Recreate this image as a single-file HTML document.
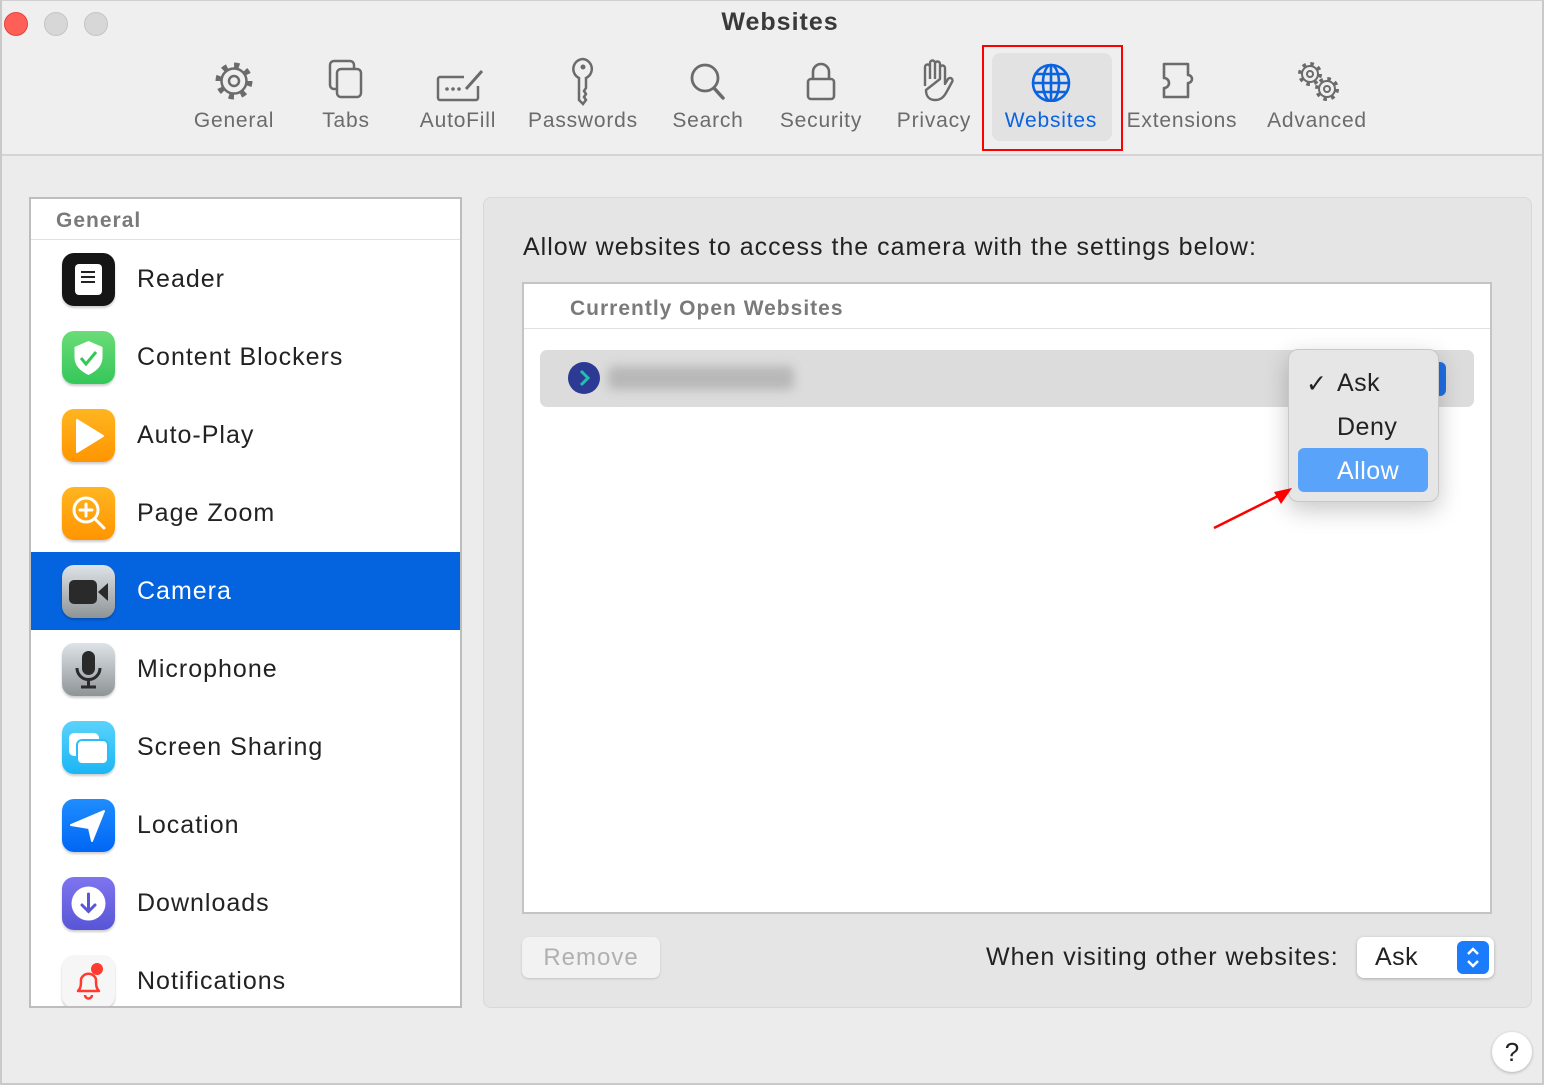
<!DOCTYPE html>
<html><head><meta charset="utf-8"><style>
*{box-sizing:border-box;margin:0;padding:0}
body{width:1544px;height:1085px;overflow:hidden;background:#ececec;font-family:"Liberation Sans",sans-serif;position:relative}
.win{position:absolute;left:0;top:0;width:1544px;height:1085px;border:2px solid #c9c9c9;border-top:1px solid #d0d0d0}
.tb{position:absolute;left:2px;top:1px;width:1540px;height:155px;background:#efefef;border-bottom:2px solid #d4d4d4}
.dot{position:absolute;top:12px;width:24px;height:24px;border-radius:50%;background:#d7d7d7;border:1px solid #c3c3c3}
.title{position:absolute;left:0;width:1560px;top:8px;text-align:center;font-weight:bold;font-size:25px;color:#3a3a3a;letter-spacing:1px}
.tool{position:absolute;top:56px;text-align:center;font-size:21px;color:#6b6b6b;letter-spacing:0.8px}
.tool svg{display:block;margin:0 auto}
.tool span{display:block;margin-top:7px;white-space:nowrap}
.abs{position:absolute}
.side{position:absolute;left:29px;top:197px;width:433px;height:811px;background:#fff;border:2px solid #bdbdbd;overflow:hidden}
.row{position:absolute;left:0;width:431px;height:78px}
.row .ic{position:absolute;left:31px;top:13px;width:53px;height:53px;border-radius:12px;overflow:hidden;box-shadow:0 2px 2px rgba(0,0,0,.2)}
.row .t{position:absolute;left:106px;top:25px;font-size:25px;color:#222;letter-spacing:1px}
.right{position:absolute;left:483px;top:197px;width:1049px;height:811px;background:#e5e5e5;border:1px solid #d8d8d8;border-radius:8px}
</style></head><body>
<div class="win"></div>
<div class="tb"></div>
<div class="dot" style="left:4px;background:#fe5f57;border-color:#e0443e"></div>
<div class="dot" style="left:44px"></div>
<div class="dot" style="left:84px"></div>
<div class="title">Websites</div>

<!-- toolbar -->
<div class="tool" style="left:180px;width:108px"><svg width="44" height="46" viewBox="0 0 44 46"><circle cx="22" cy="25" r="16" fill="none" stroke="#6b6b6b" stroke-width="5" stroke-dasharray="5.3 7.26"/><circle cx="22" cy="25" r="12.5" fill="#efefef" stroke="#6b6b6b" stroke-width="2.5"/><circle cx="22" cy="25" r="5" fill="none" stroke="#6b6b6b" stroke-width="2.5"/></svg><span>General</span></div>
<div class="tool" style="left:305px;width:82px"><svg width="44" height="46" viewBox="0 0 44 46"><rect x="6" y="5" width="24" height="28" rx="4" fill="none" stroke="#6b6b6b" stroke-width="2.5"/><rect x="13" y="13" width="24" height="28" rx="4" fill="#efefef" stroke="#6b6b6b" stroke-width="2.5"/></svg><span>Tabs</span></div>
<div class="tool" style="left:408px;width:100px"><svg width="60" height="46" viewBox="0 0 60 46"><path d="M36 21H12a2 2 0 0 0-2 2v19a2 2 0 0 0 2 2h36a2 2 0 0 0 2-2V30" fill="none" stroke="#6b6b6b" stroke-width="2.5"/><circle cx="19" cy="33" r="1.8" fill="#6b6b6b"/><circle cx="25" cy="33" r="1.8" fill="#6b6b6b"/><circle cx="31" cy="33" r="1.8" fill="#6b6b6b"/><path d="M38 33l16-18" stroke="#6b6b6b" stroke-width="3"/></svg><span>AutoFill</span></div>
<div class="tool" style="left:518px;width:130px"><svg width="44" height="50" viewBox="0 0 44 50"><path d="M22 3a10 10 0 0 0-4 19v22l4 4 3-4-2-3 2-3-2-3 2-3v-10a10 10 0 0 0-3-19z" fill="none" stroke="#6b6b6b" stroke-width="2.5"/><circle cx="22" cy="11" r="2.5" fill="#6b6b6b"/></svg><span style="margin-top:3px">Passwords</span></div>
<div class="tool" style="left:660px;width:96px"><svg width="44" height="46" viewBox="0 0 44 46"><circle cx="19" cy="22" r="13" fill="none" stroke="#6b6b6b" stroke-width="2.8"/><path d="M28 32l9 10" stroke="#6b6b6b" stroke-width="3.5" stroke-linecap="round"/></svg><span>Search</span></div>
<div class="tool" style="left:766px;width:110px"><svg width="44" height="46" viewBox="0 0 44 46"><path d="M14 23V16a8 8 0 0 1 16 0v7" fill="none" stroke="#6b6b6b" stroke-width="2.6"/><rect x="9" y="23" width="26" height="20" rx="3" fill="none" stroke="#6b6b6b" stroke-width="2.6"/></svg><span>Security</span></div>
<div class="tool" style="left:884px;width:100px"><svg width="44" height="46" viewBox="0 0 44 46"><path d="M13 30V11a2.5 2.5 0 0 1 5 0v12M18 23V7a2.5 2.5 0 0 1 5 0v16M23 23V8a2.5 2.5 0 0 1 5 0v15M28 23V12a2.5 2.5 0 0 1 5 0v16l3-5a2.5 2.5 0 0 1 4 3l-6 11c-3 5-6 7-11 7-6 0-9-4-9-10z" fill="none" stroke="#6b6b6b" stroke-width="2.4" stroke-linejoin="round"/></svg><span>Privacy</span></div>
<div class="abs" style="left:982px;top:45px;width:141px;height:106px;border:2px solid #f00"></div>
<div class="abs" style="left:992px;top:53px;width:120px;height:88px;background:#e2e2e2;border-radius:8px"></div>
<div class="tool" style="left:990px;width:122px;color:#0a63e0"><svg width="44" height="46" viewBox="0 0 44 46"><g fill="none" stroke="#0a63e0" stroke-width="2.6"><circle cx="22" cy="27" r="18"/><ellipse cx="22" cy="27" rx="8" ry="18"/><path d="M22 9v36M4 27h36M7 18h30M7 36h30"/></g></svg><span>Websites</span></div>
<div class="tool" style="left:1118px;width:128px"><svg width="52" height="46" viewBox="0 0 52 46"><path d="M8 8h24v11a4 4 0 1 1 0 8v14H8V32a5 5 0 1 0 0-10z" fill="none" stroke="#6b6b6b" stroke-width="2.6" stroke-linejoin="round"/></svg><span>Extensions</span></div>
<div class="tool" style="left:1256px;width:122px"><svg width="60" height="46" viewBox="0 0 60 46"><circle cx="23" cy="18" r="10" fill="none" stroke="#6b6b6b" stroke-width="4" stroke-dasharray="3.5 4.35"/><circle cx="23" cy="18" r="8" fill="#efefef" stroke="#6b6b6b" stroke-width="2"/><circle cx="23" cy="18" r="3" fill="none" stroke="#6b6b6b" stroke-width="2"/><circle cx="40" cy="33" r="10" fill="none" stroke="#6b6b6b" stroke-width="4" stroke-dasharray="3.5 4.35"/><circle cx="40" cy="33" r="8" fill="#efefef" stroke="#6b6b6b" stroke-width="2"/><circle cx="40" cy="33" r="3" fill="none" stroke="#6b6b6b" stroke-width="2"/></svg><span>Advanced</span></div>

<!-- sidebar -->
<div class="side">
<div class="abs" style="left:25px;top:10px;font-size:21px;font-weight:bold;color:#7a7a7a;letter-spacing:1px">General</div>
<div class="abs" style="left:0;top:40px;width:431px;height:1px;background:#e2e2e2"></div>
<div class="row" style="top:41px"><div class="ic" style="background:#151515"><div class="abs" style="left:13px;top:11px;width:27px;height:31px;background:#fff;border-radius:4px"></div><div class="abs" style="left:19px;top:18px;width:14px;height:2px;background:#222;box-shadow:0 5px 0 #222,-0 10px 0 #222"></div></div><div class="t">Reader</div></div>
<div class="row" style="top:119px"><div class="ic" style="background:linear-gradient(#6bdc78,#34c759)"><svg width="53" height="53"><path d="M26.5 10l14 6v10c0 9-6 14-14 18-8-4-14-9-14-18V16z" fill="#fff"/><path d="M19 27l5 6 10-12" fill="none" stroke="#34c759" stroke-width="3"/></svg></div><div class="t">Content Blockers</div></div>
<div class="row" style="top:197px"><div class="ic" style="background:linear-gradient(#ffb520,#ff9500)"><svg width="53" height="53"><path d="M15 11l26 16-26 16z" fill="#fff" stroke="#fff" stroke-width="2" stroke-linejoin="round"/></svg></div><div class="t">Auto-Play</div></div>
<div class="row" style="top:275px"><div class="ic" style="background:linear-gradient(#ffb520,#ff9500)"><svg width="53" height="53"><circle cx="24" cy="23" r="12" fill="none" stroke="#fff" stroke-width="3"/><path d="M24 17v12M18 23h12M33 32l9 9" stroke="#fff" stroke-width="3" stroke-linecap="round"/></svg></div><div class="t">Page Zoom</div></div>
<div class="row" style="top:353px;background:#0463df"><div class="ic" style="background:linear-gradient(#dde3e8,#8f9497)"><svg width="53" height="53"><rect x="7" y="15" width="28" height="24" rx="5" fill="#2a2a2a"/><path d="M36 27l10-9v18z" fill="#2a2a2a"/></svg></div><div class="t" style="color:#fff">Camera</div></div>
<div class="row" style="top:431px"><div class="ic" style="background:linear-gradient(#dde3e8,#8f9497)"><svg width="53" height="53"><rect x="20" y="8" width="13" height="24" rx="6.5" fill="#2a2a2a"/><path d="M15 25a11.5 11.5 0 0 0 23 0M26.5 37v7M19 44h15" fill="none" stroke="#2a2a2a" stroke-width="3"/></svg></div><div class="t">Microphone</div></div>
<div class="row" style="top:509px"><div class="ic" style="background:linear-gradient(#5ad3fa,#1cb5f5)"><svg width="53" height="53"><rect x="7" y="12" width="30" height="23" rx="5" fill="#fff"/><rect x="15" y="19" width="31" height="24" rx="5" fill="#fff" stroke="#2cbdf7" stroke-width="2"/></svg></div><div class="t">Screen Sharing</div></div>
<div class="row" style="top:587px"><div class="ic" style="background:linear-gradient(#1f8dfe,#0066f5)"><svg width="53" height="53"><path d="M9 26L42 12 30 42 27 29z" fill="#fff" stroke="#fff" stroke-width="2" stroke-linejoin="round"/></svg></div><div class="t">Location</div></div>
<div class="row" style="top:665px"><div class="ic" style="background:linear-gradient(#7f74f0,#5856d6)"><svg width="53" height="53"><circle cx="26.5" cy="26.5" r="17" fill="#fff"/><path d="M26.5 17v17M20 28l6.5 6.5L33 28" fill="none" stroke="#5856d6" stroke-width="3" stroke-linecap="round"/></svg></div><div class="t">Downloads</div></div>
<div class="row" style="top:743px"><div class="ic" style="background:#f6f6f6"><svg width="53" height="53"><path d="M16 36c3-3 3-6 3-12a8 8 0 0 1 15 0c0 6 0 9 3 12z" fill="none" stroke="#ff3b30" stroke-width="2.5" stroke-linejoin="round"/><path d="M23 40a3.5 3.5 0 0 0 7 0" fill="none" stroke="#ff3b30" stroke-width="2.5"/><circle cx="35" cy="14" r="6" fill="#ff3b30"/></svg></div><div class="t">Notifications</div></div>
</div>

<!-- right pane -->
<div class="right"></div>
<div class="abs" style="left:523px;top:233px;font-size:25px;color:#222;letter-spacing:1px;white-space:nowrap">Allow websites to access the camera with the settings below:</div>
<div class="abs" style="left:522px;top:282px;width:970px;height:632px;background:#fff;border:2px solid #c4c4c4"></div>
<div class="abs" style="left:570px;top:297px;font-size:21px;font-weight:bold;color:#7a7a7a;letter-spacing:1px">Currently Open Websites</div>
<div class="abs" style="left:524px;top:328px;width:966px;height:1px;background:#e2e2e2"></div>
<div class="abs" style="left:540px;top:350px;width:934px;height:57px;background:#dcdcdc;border-radius:7px"></div>
<div class="abs" style="left:568px;top:362px;width:32px;height:32px;border-radius:50%;background:#2c3a94"><svg width="32" height="32"><path d="M13 9l7 7-7 7" fill="none" stroke="#1fc0b0" stroke-width="3"/></svg></div>
<div class="abs" style="left:608px;top:366px;width:186px;height:24px;background:#b8b8b8;filter:blur(5px);border-radius:6px"></div>
<div class="abs" style="left:1420px;top:362px;width:26px;height:34px;background:#1f6fe6;border-radius:6px"></div>
<!-- popup -->
<div class="abs" style="left:1288px;top:349px;width:151px;height:153px;background:#e6e6e6;border:1px solid #c8c8c8;border-radius:10px;box-shadow:0 8px 24px rgba(0,0,0,.22)"></div>
<div class="abs" style="left:1306px;top:369px;font-size:25px;color:#222">✓</div>
<div class="abs" style="left:1337px;top:369px;font-size:25px;color:#222;letter-spacing:0.5px">Ask</div>
<div class="abs" style="left:1337px;top:413px;font-size:25px;color:#222;letter-spacing:0.5px">Deny</div>
<div class="abs" style="left:1298px;top:448px;width:130px;height:44px;background:#5aa3fb;border-radius:6px"></div>
<div class="abs" style="left:1337px;top:457px;font-size:25px;color:#fff;letter-spacing:0.5px">Allow</div>
<svg class="abs" style="left:1210px;top:484px" width="90" height="48"><path d="M4 44L72 10" stroke="#f00" stroke-width="2.5"/><path d="M82 4L64 8 71 20z" fill="#f00"/></svg>

<div class="abs" style="left:522px;top:937px;width:138px;height:41px;background:#f2f2f2;border-radius:7px;box-shadow:0 1px 2px rgba(0,0,0,.15);font-size:24px;color:#b0b0b0;text-align:center;line-height:41px;letter-spacing:1px">Remove</div>
<div class="abs" style="left:986px;top:943px;font-size:25px;color:#222;letter-spacing:1px;white-space:nowrap">When visiting other websites:</div>
<div class="abs" style="left:1357px;top:937px;width:137px;height:41px;background:#fff;border-radius:7px;box-shadow:0 1px 3px rgba(0,0,0,.25)"><span class="abs" style="left:18px;top:6px;font-size:25px;color:#222;letter-spacing:0.5px">Ask</span><div class="abs" style="left:100px;top:4px;width:32px;height:33px;background:#1a7cfa;border-radius:6px"><svg width="32" height="33"><path d="M11 13l5-5 5 5M11 20l5 5 5-5" fill="none" stroke="#fff" stroke-width="2.5"/></svg></div></div>
<div class="abs" style="left:1492px;top:1032px;width:40px;height:40px;border-radius:50%;background:#fff;box-shadow:0 1px 3px rgba(0,0,0,.25);text-align:center;font-size:26px;line-height:40px;color:#222">?</div>
</body></html>
